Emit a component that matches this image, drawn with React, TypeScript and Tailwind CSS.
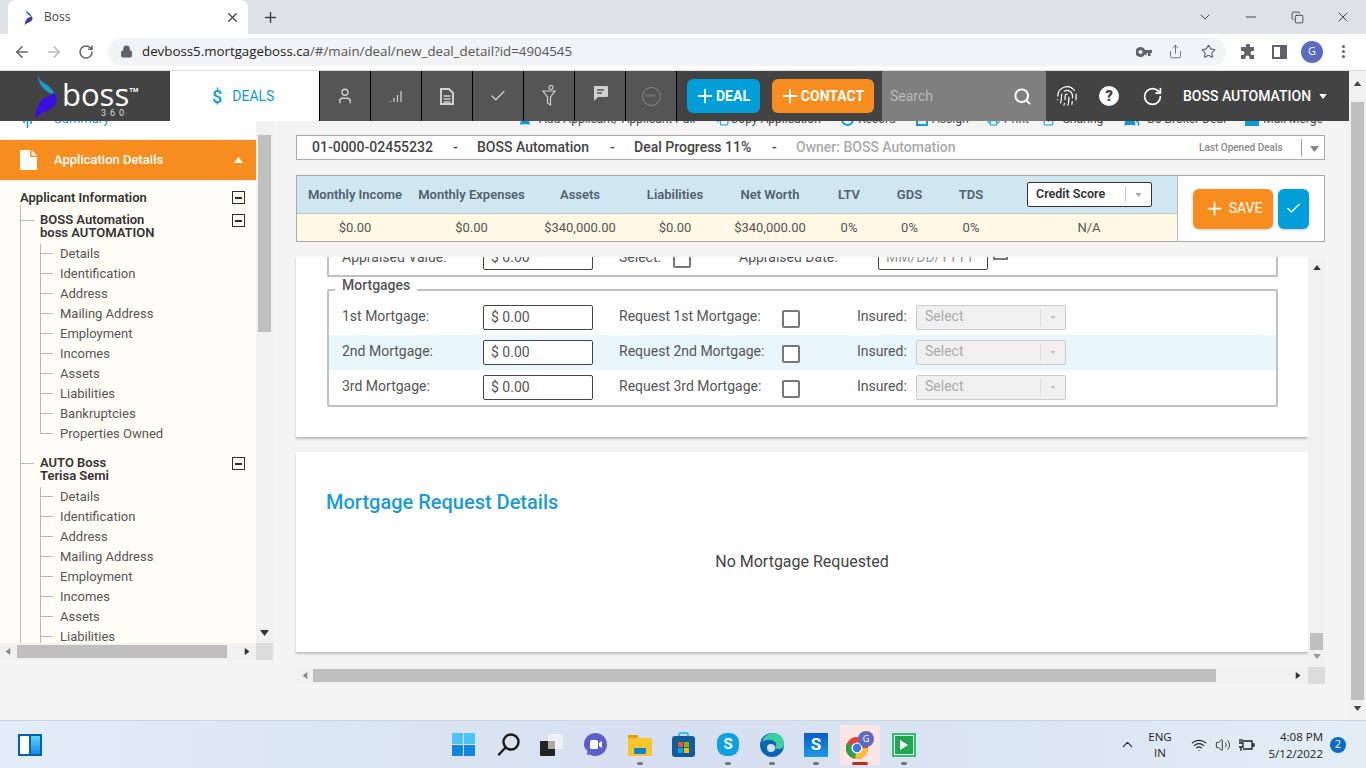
import {
  ArrowLeft,
  ArrowRight,
  Check,
  ChevronDown,
  ChevronUp,
  Copy,
  Fingerprint,
  Lock,
  Minus,
  Plus,
  Printer,
  RotateCw,
  Search,
  Share,
  Star,
  User,
  Users,
  Volume2,
  Wifi,
  X,
} from "lucide-react";

const applicantItems = [
  "Details",
  "Identification",
  "Address",
  "Mailing Address",
  "Employment",
  "Incomes",
  "Assets",
  "Liabilities",
  "Bankruptcies",
  "Properties Owned",
];

const summaryCols = [
  ["Monthly Income", "$0.00"],
  ["Monthly Expenses", "$0.00"],
  ["Assets", "$340,000.00"],
  ["Liabilities", "$0.00"],
  ["Net Worth", "$340,000.00"],
  ["LTV", "0%"],
  ["GDS", "0%"],
  ["TDS", "0%"],
];

const mortgages = [
  { label: "1st Mortgage:", request: "Request 1st Mortgage:", bg: "bg-white" },
  { label: "2nd Mortgage:", request: "Request 2nd Mortgage:", bg: "bg-[#e9f6fb]" },
  { label: "3rd Mortgage:", request: "Request 3rd Mortgage:", bg: "bg-white" },
];

function Tri({ className, color = "#555" }: { className?: string; color?: string }) {
  return (
    <svg width="9" height="6" viewBox="0 0 9 6" className={className}>
      <polygon points="0,0 9,0 4.5,6" fill={color} />
    </svg>
  );
}

function MinusBox() {
  return (
    <span className="flex h-[13px] w-[13px] shrink-0 items-center justify-center border border-[#33301f] bg-[#fffdf5]">
      <span className="h-[2px] w-[7px] bg-[#33301f]" />
    </span>
  );
}

function TreeItem({ text, last }: { text: string; last: boolean }) {
  return (
    <div className="flex h-5 text-[13px] text-[#555]">
      <div className="flex w-[13px] flex-col">
        <span className="h-[9px] border-l border-[#bdb7a5]" />
        <span className="h-px w-[13px] bg-[#bdb7a5]" />
        {!last && <span className="h-[10px] border-l border-[#bdb7a5]" />}
      </div>
      <span className="ml-[7px] leading-5">{text}</span>
    </div>
  );
}

function ApplicantGroup({ first, second, top }: { first: string; second: string; top: string }) {
  return (
    <div className={top}>
      <div className="flex h-[30px] items-start">
        <span className="mt-[6px] h-px w-[13px] shrink-0 bg-[#bdb7a5]" />
        <div className="-mt-px ml-[6px] w-[193px] text-[13px] font-semibold leading-[13px] text-[#333]">
          <div>{first}</div>
          <div>{second}</div>
        </div>
        <MinusBox />
      </div>
      <div className="ml-[19px]">
        {applicantItems.map((item, i) => (
          <TreeItem key={item} text={item} last={i === applicantItems.length - 1} />
        ))}
      </div>
    </div>
  );
}

function Sidebar() {
  return (
    <div className="w-[273px] shrink-0">
      <div className="flex h-[531px]">
        <div className="flex w-[256px] flex-col">
          <div className="flex h-[27px] items-start bg-white pl-[23px]">
            <svg width="12" height="16" viewBox="0 0 12 16" stroke="#1a9bd7" strokeWidth="1.6">
              <path d="M1 3v8M4.5 1v15M8 4v8M11 2v7" />
            </svg>
            <span className="ml-[19px] text-[13px] leading-[14px] text-[#1a9bd7]">Summary</span>
          </div>
          <div className="mt-px flex h-[40px] items-center bg-[#f78d1f] pl-[20px] pr-[12px] text-white">
            <svg width="17" height="20" viewBox="0 0 17 20" fill="#fff">
              <path d="M1 0h9v6a1 1 0 0 0 1 1h6v12a1 1 0 0 1-1 1H1a1 1 0 0 1-1-1V1a1 1 0 0 1 1-1zM11.500 0 17 5.500h-5.500z" />
            </svg>
            <span className="ml-[17px] flex-1 text-[13px] font-medium">Application Details</span>
            <Tri color="#fff" className="h-[6px] w-[11px] rotate-180" />
          </div>
          <div className="h-[463px] overflow-hidden border-t border-[#e8e8e8] bg-[#fffdf5] pt-[9px]">
            <div className="flex h-[15px] w-[245px] items-center justify-between pl-5 text-[13px] font-semibold text-[#333]">
              <span>Applicant Information</span>
              <MinusBox />
            </div>
            <div className="ml-5 w-[225px] border-l border-[#bdb7a5] pt-[9px]">
              <ApplicantGroup first="BOSS Automation" second="boss AUTOMATION" top="" />
              <ApplicantGroup first="AUTO Boss" second="Terisa Semi" top="mt-[13px]" />
            </div>
          </div>
        </div>
        <div className="flex w-[17px] flex-col items-center bg-[#f1f1f1] pt-[23px]">
          <div className="h-[197px] w-[13px] bg-[#bfbfbf]" />
          <div className="flex-1" />
          <Tri color="#333" className="mb-[7px]" />
        </div>
      </div>
      <div className="flex h-[17px]">
        <div className="flex w-[256px] items-center bg-[#f1f1f1] pl-[4px] pr-[5px]">
          <Tri className="h-[5px] w-[8px] rotate-90" color="#888" />
          <div className="ml-[5px] h-[13px] w-[210px] bg-[#bfbfbf]" />
          <div className="flex-1" />
          <Tri className="h-[5px] w-[8px] -rotate-90" color="#333" />
        </div>
        <div className="w-[17px] bg-[#dcdcdc]" />
      </div>
    </div>
  );
}

function ActionLink({ icon, text, width, iconWidth }: { icon: React.ReactNode; text: string; width: string; iconWidth: string }) {
  return (
    <div className={`flex items-center ${width}`}>
      <span className={`flex text-[#0d9ad8] ${iconWidth}`}>{icon}</span>
      <span className="whitespace-nowrap text-[12px] text-[#444]">{text}</span>
    </div>
  );
}

function Field({ value, muted }: { value: string; muted?: boolean }) {
  return (
    <div
      className={`flex h-[25px] w-[110px] shrink-0 items-center rounded-[2px] border border-[#444] bg-white pl-[7px] text-[14px] ${
        muted ? "text-[#999]" : "text-[#555]"
      }`}
    >
      {value}
    </div>
  );
}

function Box({ className = "" }: { className?: string }) {
  return <span className={`block h-[18px] w-[18px] shrink-0 rounded-[2px] border-2 border-[#777] bg-white ${className}`} />;
}

function MortgageRow({ label, request, bg }: { label: string; request: string; bg: string }) {
  return (
    <div className={`flex h-[35px] items-center pl-[13px] text-[14px] text-[#555] ${bg}`}>
      <span className="w-[141px] pb-[3px]">{label}</span>
      <Field value="$ 0.00" />
      <span className="ml-[26px] w-[163px] pb-[3px]">{request}</span>
      <Box className="mt-[3px]" />
      <span className="ml-[57px] w-[59px] pb-[3px]">Insured:</span>
      <div className="flex h-[25px] w-[150px] items-center rounded-[2px] border border-[#ccc] bg-[#f0f0f0] pl-2 text-[#aaa]">
        <span className="w-[115px] pb-[3px]">Select</span>
        <span className="h-[17px] border-l border-[#ddd]" />
        <Tri className="ml-[9px] h-[3px] w-[6px]" color="#bbb" />
      </div>
    </div>
  );
}

function MainPanel() {
  return (
    <div className="ml-[23px] w-[1029px]">
      <div className="flex h-[14px] items-center pl-[222px]">
        <ActionLink width="w-[198px]" iconWidth="w-[21px]" text="Add Applicant/ Applicant Pull" icon={<User size={14} fill="#0d9ad8" />} />
        <ActionLink width="w-[126px]" iconWidth="w-[15px]" text="Copy Application" icon={<Copy size={13} />} />
        <ActionLink width="w-[75px]" iconWidth="w-[17px]" text="Record" icon={<span className="h-[13px] w-[13px] rounded-full border-2 border-[#0d9ad8]" />} />
        <ActionLink width="w-[71px]" iconWidth="w-[16px]" text="Assign" icon={<span className="h-[13px] w-[12px] border-2 border-[#0d9ad8]" />} />
        <ActionLink width="w-[55px]" iconWidth="w-[17px]" text="Print" icon={<Printer size={13} />} />
        <ActionLink width="w-[82px]" iconWidth="w-[21px]" text="Sharing" icon={<Share size={13} />} />
        <ActionLink width="w-[122px]" iconWidth="w-[23px]" text="Go Broker Deal" icon={<Users size={16} fill="#0d9ad8" />} />
        <ActionLink width="w-[80px]" iconWidth="w-[18px]" text="Mail Merge" icon={<span className="h-[13px] w-[14px] bg-[#0d9ad8]" />} />
      </div>

      <div className="mt-[9px] flex h-[25px] items-center border border-[#aaa] bg-white pl-[15px] text-[14px] font-medium text-[#444]">
        <span className="w-[141px]">01-0000-02455232</span>
        <span className="w-[24px]">-</span>
        <span className="w-[133px]">BOSS Automation</span>
        <span className="w-[24px]">-</span>
        <span className="w-[138px]">Deal Progress 11%</span>
        <span className="w-[24px]">-</span>
        <span className="w-[403px] text-[#aaa]">Owner: BOSS Automation</span>
        <span className="w-[102px] text-[10px] text-[#888]">Last Opened Deals</span>
        <span className="h-[17px] border-l border-[#999]" />
        <Tri className="ml-[8px] mt-[3px]" color="#888" />
      </div>

      <div className="mt-[15px] flex h-[67px] border border-[#aaa] bg-white">
        <div className="w-[881px] border-r border-[#bbb]">
          <div className="grid h-[38px] grid-cols-[116px_117px_100px_90px_100px_58px_63px_60px_176px] items-center border-b border-[#b5c3ca] bg-[#d0e7f1] text-center text-[13px] font-semibold text-[#51616e]">
            {summaryCols.map(([head]) => (
              <span key={head}>{head}</span>
            ))}
            <div className="ml-[26px] flex h-[25px] w-[125px] items-center rounded-[2px] border border-[#333] bg-white pl-2 text-left font-semibold text-[#333]">
              <span className="w-[89px] text-[12.5px]">Credit Score</span>
              <span className="h-[15px] border-l border-[#ccc]" />
              <Tri className="ml-[9px] h-[4px] w-[7px]" color="#aaa" />
            </div>
          </div>
          <div className="grid h-[27px] grid-cols-[116px_117px_100px_90px_100px_58px_63px_60px_176px] items-center bg-[#fef8e4] text-center text-[13px] text-[#555]">
            {summaryCols.map(([head, value]) => (
              <span key={head}>{value}</span>
            ))}
            <span>N/A</span>
          </div>
        </div>
        <div className="flex flex-1 items-center pl-[15px]">
          <button className="flex h-[40px] w-[80px] items-center justify-center gap-1 rounded-md bg-[#f78d1f] text-[14px] text-white shadow-[0_1px_3px_#ccc]">
            <Plus size={21} strokeWidth={2} />
            SAVE
          </button>
          <button className="ml-[5px] flex h-[40px] w-[31px] items-center justify-center rounded-md bg-[#009fda] text-white shadow-[0_1px_3px_#ccc]">
            <Check size={17} strokeWidth={1.8} />
          </button>
        </div>
      </div>

      <div className="mt-[15px] flex h-[410px]">
        <div className="w-[1012px]">
          <div className="h-[180px] overflow-hidden bg-white px-[31px] shadow-[0_2px_2px_#bdbdbd]">
            <div className="flex h-[20px] w-[951px] flex-col rounded-b-[2px] border-x-2 border-b-2 border-[#c0c0c0]">
              <div className="-mt-[12px] flex items-center pl-[13px] text-[14px] text-[#555]">
                <span className="w-[141px]">Appraised Value:</span>
                <Field value="$ 0.00" />
                <span className="ml-[26px] w-[54px]">Select:</span>
                <Box className="mt-[3px]" />
                <span className="ml-[48px] w-[139px]">Appraised Date:</span>
                <Field value="MM/DD/YYYY" muted />
                <span className="-mt-[10px] ml-[5px] block h-[15px] w-[15px] border-2 border-[#777]" />
              </div>
            </div>
            <fieldset className="mt-[4px] w-[951px] rounded-[2px] border-2 border-[#c0c0c0]">
              <legend className="ml-[6px] h-[18px] px-[7px] text-[14px] font-medium leading-[8px] text-[#555]">Mortgages</legend>
              <div className="pt-px">
                {mortgages.map((m) => (
                  <MortgageRow key={m.label} {...m} />
                ))}
              </div>
            </fieldset>
          </div>
          <div className="mt-[15px] h-[200px] bg-white pl-[30px] pt-[37px] shadow-[0_2px_2px_#bdbdbd]">
            <h2 className="text-[20px] font-medium leading-[26px] text-[#1a9bd7]">Mortgage Request Details</h2>
            <p className="mt-[34px] pr-[30px] text-center text-[16px] leading-[26px] text-[#444]">No Mortgage Requested</p>
          </div>
        </div>
        <div className="flex w-[17px] flex-col items-center bg-[#f1f1f1] pt-[8px]">
          <Tri className="h-[5px] w-[8px] rotate-180" color="#333" />
          <div className="mt-[363px] h-[17px] w-[13px] bg-[#bfbfbf]" />
          <Tri className="mt-[4px] h-[5px] w-[8px]" color="#999" />
        </div>
      </div>

      <div className="flex h-[17px]">
        <div className="flex w-[1012px] items-center bg-[#f1f1f1] pl-[5px] pr-[6px]">
          <Tri className="h-[5px] w-[8px] rotate-90" color="#888" />
          <div className="ml-[4px] h-[13px] w-[903px] bg-[#bfbfbf]" />
          <div className="flex-1" />
          <Tri className="h-[5px] w-[8px] -rotate-90" color="#333" />
        </div>
        <div className="w-[17px] bg-[#dcdcdc]" />
      </div>
    </div>
  );
}

function Logo() {
  return (
    <div className="flex h-full w-[170px] shrink-0 items-start bg-[#434343] pl-[35px] pt-[3px]">
      <svg width="24" height="44" viewBox="0 0 24 44">
        <path d="M3 0c1 7 5 8 9 11 4 3 7 6 7 9-1 1-7-2-11-6C5 11 3 6 3 0z" fill="#1b9ad6" />
        <path d="M19 19c3 4 4 8 1 12-4 5-12 7-20 13 1-7 2-13 7-18 4-4 9-4 12-7z" fill="#3a0ee0" />
      </svg>
      <div className="ml-[3px] text-white">
        <div className="flex items-start">
          <span className="font-['Open_Sans'] text-[31px] font-normal leading-[40px]">boss</span>
          <span className="mt-[11px] text-[6px] font-bold">TM</span>
        </div>
        <div className="-mt-[6px] pl-[39px] text-[9px] leading-[10px] tracking-[4px] text-[#ddd]">360</div>
      </div>
    </div>
  );
}

function NavCell({ children }: { children: React.ReactNode }) {
  return <div className="flex h-full w-[51px] items-center justify-center border-l border-black bg-[#555] text-[#d0d0d0]">{children}</div>;
}

function AppHeader() {
  return (
    <div className="relative z-10 flex h-[50px] bg-[#434343]">
      <Logo />
      <div className="flex w-[149px] items-center gap-[10px] bg-white pl-[42px] text-[14px] text-[#0d9ad8]">
        <span className="text-[18px] font-medium">$</span>
        <span>DEALS</span>
      </div>
      <NavCell>
        <User size={18} strokeWidth={1.8} />
      </NavCell>
      <NavCell>
        <svg width="14" height="14" viewBox="0 0 14 14" stroke="#d0d0d0" strokeWidth="1.2">
          <path d="M1.500 13v-1M5 13V9M8.500 13V6M12 13V2" />
        </svg>
      </NavCell>
      <NavCell>
        <svg width="14" height="17" viewBox="0 0 14 17" fill="none" stroke="#d0d0d0" strokeWidth="2">
          <path d="M1 1h8l4 4v11H1z" />
          <path d="M3.500 8h7M3.500 11h7M3.500 14h7" strokeWidth="1.400" />
        </svg>
      </NavCell>
      <NavCell>
        <Check size={18} strokeWidth={1.8} />
      </NavCell>
      <NavCell>
        <svg width="14" height="22" viewBox="0 0 14 22" fill="none" stroke="#d0d0d0" strokeWidth="1.2">
          <circle cx="9" cy="2.500" r="2" />
          <path d="M1 6h12L8.500 12v8l-3-2v-6z" />
        </svg>
      </NavCell>
      <NavCell>
        <svg width="15" height="15" viewBox="0 0 15 15" className="-mt-[5px]">
          <path d="M1 0h13a1 1 0 0 1 1 1v9a1 1 0 0 1-1 1H5l-4 4V1a1 1 0 0 1 0-1z" fill="#d0d0d0" />
          <path d="M4 4h7M4 7h5" stroke="#555" strokeWidth="1.300" />
        </svg>
      </NavCell>
      <NavCell>
        <span className="flex h-[19px] w-[19px] items-center justify-center rounded-full border border-[#888] text-[4px] text-[#888]">SIMPL</span>
      </NavCell>
      <div className="flex h-full w-[206px] items-center gap-3 border-l border-black pl-[10px] font-['Roboto'] text-[14px] font-bold text-white">
        <button className="flex h-[34px] w-[73px] items-center justify-center rounded-md bg-[#009fda] pr-[3px]">
          <Plus size={22} strokeWidth={2} />
          DEAL
        </button>
        <button className="flex h-[34px] w-[102px] items-center justify-center rounded-md bg-[#f78d1f] pr-[3px]">
          <Plus size={22} strokeWidth={2} />
          CONTACT
        </button>
      </div>
      <div className="flex h-full w-[164px] items-center justify-between bg-[#7f7f7f] pl-2 pr-[14px] text-[14px] text-[#bbb]">
        <span>Search</span>
        <Search size={19} strokeWidth={2.5} className="text-white" />
      </div>
      <div className="flex items-center pl-[10px] text-white">
        <Fingerprint size={22} strokeWidth={1.3} />
        <span className="ml-[21px] flex h-[20px] w-[20px] items-center justify-center rounded-full bg-white text-[15px] font-black leading-none text-[#434343]">?</span>
        <RotateCw size={21} strokeWidth={2} className="ml-[23px]" />
        <span className="ml-[20px] whitespace-nowrap text-[14px] font-medium">BOSS AUTOMATION</span>
        <Tri color="#fff" className="ml-[7px] h-[5px] w-[10px]" />
      </div>
    </div>
  );
}

function BrowserChrome() {
  return (
    <div className="font-['Open_Sans']">
      <div className="flex h-[34px] bg-[#dee1e6]">
        <div className="ml-[8px] flex h-[34px] w-[240px] items-center rounded-t-lg bg-white pl-[16px] pr-[8px] text-[12px] text-[#444]">
          <svg width="10" height="16" viewBox="0 0 24 44">
            <path d="M3 0c1 7 5 8 9 11 4 3 7 6 7 9-1 1-7-2-11-6C5 11 3 6 3 0z" fill="#1b6fb6" />
            <path d="M19 19c3 4 4 8 1 12-4 5-12 7-20 13 1-7 2-13 7-18 4-4 9-4 12-7z" fill="#3f3aa8" />
          </svg>
          <span className="ml-[10px] flex-1">Boss</span>
          <X size={15} strokeWidth={2.2} className="text-[#444]" />
        </div>
        <Plus size={17} strokeWidth={2} className="ml-[14px] mt-[9px] text-[#444]" />
        <div className="ml-auto flex items-center pr-[15px] text-[#222]">
          <ChevronDown size={16} strokeWidth={1.2} />
          <Minus size={16} strokeWidth={1.2} className="ml-[30px]" />
          <Copy size={13} strokeWidth={1.4} className="ml-[32px]" />
          <X size={16} strokeWidth={1.2} className="ml-[31px]" />
        </div>
      </div>
      <div className="flex h-[37px] items-center border-b border-[#dadce0] bg-white pb-px pl-[13px]">
        <ArrowLeft size={18} className="text-[#5f6368]" />
        <ArrowRight size={18} className="ml-[14px] text-[#b8babd]" />
        <RotateCw size={16} strokeWidth={2.2} className="ml-[15px] text-[#5f6368]" />
        <div className="ml-[14px] flex h-[28px] w-[1118px] items-center rounded-full bg-[#f1f3f4] pl-[12px] pr-[10px] text-[#5f6368]">
          <Lock size={13} fill="#5f6368" strokeWidth={2} />
          <span className="ml-[9px] flex-1 text-[13.3px] text-[#555]">
            <span className="text-[#222]">devboss5.mortgageboss.ca</span>/#/main/deal/new_deal_detail?id=4904545
          </span>
          <svg width="16" height="10" viewBox="0 0 16 10" fill="#5f6368">
            <path d="M4.500 0a5 5 0 0 1 4.500 3H16v3h-1.500v3H12V6h-1.500v2H9V7a5 5 0 1 1-4.500-7zm0 3a2 2 0 1 0 0 4 2 2 0 0 0 0-4z" />
          </svg>
          <Share size={15} strokeWidth={1.4} className="ml-[16px]" />
          <Star size={15} strokeWidth={1.8} className="ml-[18px]" />
        </div>
        <svg width="16" height="16" viewBox="0 0 16 16" fill="#5f6368" className="ml-[14px]">
          <path d="M6 1.500a2 2 0 0 1 4 0V3h4v4h-1.500a2 2 0 0 0 0 4H14v4H9.500v-1.500a2 2 0 0 0-4 0V15H1v-4h1.500a2 2 0 0 0 0-4H1V3h5z" />
        </svg>
        <span className="ml-[16px] flex h-[14px] w-[15px] border-2 border-[#5f6368]">
          <span className="ml-auto w-[5px] bg-[#5f6368]" />
        </span>
        <span className="ml-[14px] flex h-[22px] w-[22px] items-center justify-center rounded-full bg-[#5c6bc0] text-[11px] text-white">G</span>
        <span className="ml-[19px] flex flex-col gap-[2px]">
          <span className="h-[3px] w-[3px] rounded-full bg-[#5f6368]" />
          <span className="h-[3px] w-[3px] rounded-full bg-[#5f6368]" />
          <span className="h-[3px] w-[3px] rounded-full bg-[#5f6368]" />
        </span>
      </div>
    </div>
  );
}

function TaskIcon({ children, ml, dot, active }: { children: React.ReactNode; ml: string; dot?: boolean; active?: boolean }) {
  return (
    <div className={`flex flex-col items-center ${ml}`}>
      <div className={active ? "flex h-[40px] w-[40px] items-center justify-center rounded-t-[3px] bg-[#fbe5e5]" : "flex h-[40px] items-center justify-center"}>
        {children}
      </div>
      {active ? (
        <span className="-mt-[3px] h-[3px] w-[16px] rounded bg-[#c42b1c]" />
      ) : (
        <span className={`-mt-[3px] h-[3px] w-[6px] rounded ${dot ? "bg-[#777]" : "bg-transparent"}`} />
      )}
    </div>
  );
}

function Taskbar() {
  return (
    <div className="flex h-[48px] items-center border-t border-[#c9d5e6] bg-gradient-to-r from-[#e2edf7] via-[#d5dff0] to-[#e2edf6] font-['Open_Sans'] text-[#222]">
      <div className="ml-[18px] flex h-[22px] w-[24px] gap-[2px] bg-[#0c5fae] p-[2px]">
        <span className="w-[9px] rounded-[1px] bg-white" />
        <span className="flex-1 bg-gradient-to-b from-[#62d0fb] to-[#0f8ae4]" />
      </div>
      <div className="ml-[410px] flex items-center">
        <TaskIcon ml="">
          <div className="grid h-[23px] w-[23px] grid-cols-2 gap-px">
            <span className="bg-[#4fc3f7]" />
            <span className="bg-[#4fc3f7]" />
            <span className="bg-[#0f86e0]" />
            <span className="bg-[#0f86e0]" />
          </div>
        </TaskIcon>
        <TaskIcon ml="ml-[22px]">
          <svg width="23" height="23" viewBox="0 0 23 23" fill="none" stroke="#1b1b1b" strokeWidth="2.400">
            <circle cx="14" cy="9" r="7.500" />
            <path d="M8.500 14.500 2 21.500" strokeLinecap="round" />
          </svg>
        </TaskIcon>
        <TaskIcon ml="ml-[20px]">
          <div className="relative h-[22px] w-[23px]">
            <span className="absolute right-0 top-0 h-[15px] w-[15px] rounded-[1px] bg-[#f0f0f0]" />
            <span className="absolute bottom-0 left-0 h-[15px] w-[15px] rounded-[1px] bg-[#222]" />
            <span className="absolute left-[8px] top-[7px] h-[8px] w-[7px] bg-[#aaa]" />
          </div>
        </TaskIcon>
        <TaskIcon ml="ml-[21px]">
          <svg width="23" height="23" viewBox="0 0 23 23">
            <path d="M11.500 0C18 0 23 5 23 11.500S18 23 11.500 23c-2 0-4-.5-5.500-1.500L3 22l.5-4C1 16 0 14 0 11.500 0 5 5 0 11.500 0z" fill="#5b5fc7" />
            <rect x="6" y="7" width="8" height="9" rx="1.500" fill="#fff" />
            <path d="M15 10l3-2v7l-3-2z" fill="#fff" />
          </svg>
        </TaskIcon>
        <TaskIcon ml="ml-[21px]" dot>
          <svg width="24" height="22" viewBox="0 0 24 22">
            <path d="M0 2a1 1 0 0 1 1-1h8l2 3h13v18H0z" fill="#f7c52c" />
            <rect x="0" y="1" width="10" height="3" fill="#e4a112" />
            <rect x="6" y="14" width="12" height="6" rx="1" fill="#0f86c9" />
          </svg>
        </TaskIcon>
        <TaskIcon ml="ml-[20px]">
          <svg width="23" height="25" viewBox="0 0 23 25">
            <path d="M7 5V3a2 2 0 0 1 2-2h5a2 2 0 0 1 2 2v2" fill="none" stroke="#2cc4f0" strokeWidth="2" />
            <rect x="0" y="4" width="23" height="21" rx="3" fill="#125b9a" />
            <rect x="6" y="10" width="5" height="5" fill="#f25022" />
            <rect x="12" y="10" width="5" height="5" fill="#7fba00" />
            <rect x="6" y="16" width="5" height="5" fill="#00a4ef" />
            <rect x="12" y="16" width="5" height="5" fill="#ffb900" />
          </svg>
        </TaskIcon>
        <TaskIcon ml="ml-[22px]" dot>
          <span className="flex h-[23px] w-[22px] items-center justify-center rounded-[9px] bg-[#0fa0e4] font-['Roboto'] text-[15px] font-bold text-white">S</span>
        </TaskIcon>
        <TaskIcon ml="ml-[21px]" dot>
          <svg width="24" height="24" viewBox="0 0 24 24">
            <circle cx="12" cy="12" r="12" fill="#0c64b5" />
            <path d="M2 9C4 2 10 0 14 0c6 0 10 5 10 11 0 4-3 5-6 5-2 0-3-1-3-2 1-1 2-3 0-5-3-3-9-3-13 0z" fill="#3ad0a0" />
            <circle cx="11" cy="15" r="4" fill="#d5dff0" />
          </svg>
        </TaskIcon>
        <TaskIcon ml="ml-[20px]" dot>
          <span className="flex h-[24px] w-[24px] items-center justify-center bg-gradient-to-b from-[#0a5cc4] to-[#1e9ae8] font-['Roboto'] text-[17px] font-bold text-white">S</span>
        </TaskIcon>
        <TaskIcon ml="ml-[12px]" active>
          <div className="relative h-[28px] w-[28px]">
            <svg width="22" height="22" viewBox="0 0 22 22" className="absolute bottom-0 left-0">
              <circle cx="11" cy="11" r="11" fill="#e34133" />
              <path d="M11 11 1 6A11 11 0 0 0 9 21.800z" fill="#2f9e49" />
              <path d="M11 11 22 11A11 11 0 0 1 9 21.800z" fill="#fbc02d" />
              <circle cx="11" cy="11" r="5.500" fill="#fff" />
              <circle cx="11" cy="11" r="4.200" fill="#3b78e7" />
            </svg>
            <span className="absolute right-0 top-0 flex h-[16px] w-[16px] items-center justify-center rounded-full bg-[#5c6bc0] text-[9px] text-white">G</span>
          </div>
        </TaskIcon>
        <TaskIcon ml="ml-[12px]" dot>
          <span className="flex h-[24px] w-[24px] items-center justify-center border-2 border-[#29c46b] bg-white p-px">
            <span className="flex h-full w-full items-center justify-center bg-[#1fa84f]">
              <svg width="8" height="10" viewBox="0 0 8 10">
                <polygon points="0,0 8,5 0,10" fill="#fff" />
              </svg>
            </span>
          </span>
        </TaskIcon>
      </div>
      <div className="ml-auto flex items-center pr-[20px]">
        <ChevronUp size={17} strokeWidth={1.6} />
        <div className="ml-[8px] w-[32px] text-center text-[11.5px] leading-[16px]">
          <div>ENG</div>
          <div>IN</div>
        </div>
        <Wifi size={16} strokeWidth={1.7} className="ml-[15px]" />
        <Volume2 size={16} strokeWidth={1.3} className="ml-[8px]" />
        <svg width="16" height="14" viewBox="0 0 16 14" fill="none" stroke="#222" strokeWidth="1.300" className="ml-[8px]">
          <path d="M4 3h9v8H4M13 6h2v2h-2" />
          <path d="M0 5h4v4H0M1 1v3M3 1v3M2 9v4" />
        </svg>
        <div className="ml-[6px] w-[62px] text-right text-[11.5px] leading-[17px]">
          <div className="whitespace-nowrap">4:08 PM</div>
          <div>5/12/2022</div>
        </div>
        <span className="ml-[7px] flex h-[16px] w-[16px] items-center justify-center rounded-full bg-[#0a6cc4] text-[11px] text-white">2</span>
      </div>
    </div>
  );
}

export default function App() {
  return (
    <div className="flex h-[768px] w-[1366px] flex-col overflow-hidden bg-[#f4f4f4] font-['Roboto',sans-serif]">
      <BrowserChrome />
      <div className="flex h-[649px]">
        <div className="w-[1349px] shrink-0">
          <AppHeader />
          <div className="-mt-[9px] flex">
            <Sidebar />
            <MainPanel />
          </div>
        </div>
        <div className="flex w-[17px] flex-col items-center bg-[#f1f1f1] pt-[10px]">
          <Tri className="h-[5px] w-[9px] rotate-180" color="#444" />
          <div className="mt-[16px] h-[598px] w-[13px] bg-[#bfbfbf]" />
          <Tri className="mt-[6px] h-[5px] w-[9px]" color="#444" />
        </div>
      </div>
      <Taskbar />
    </div>
  );
}
